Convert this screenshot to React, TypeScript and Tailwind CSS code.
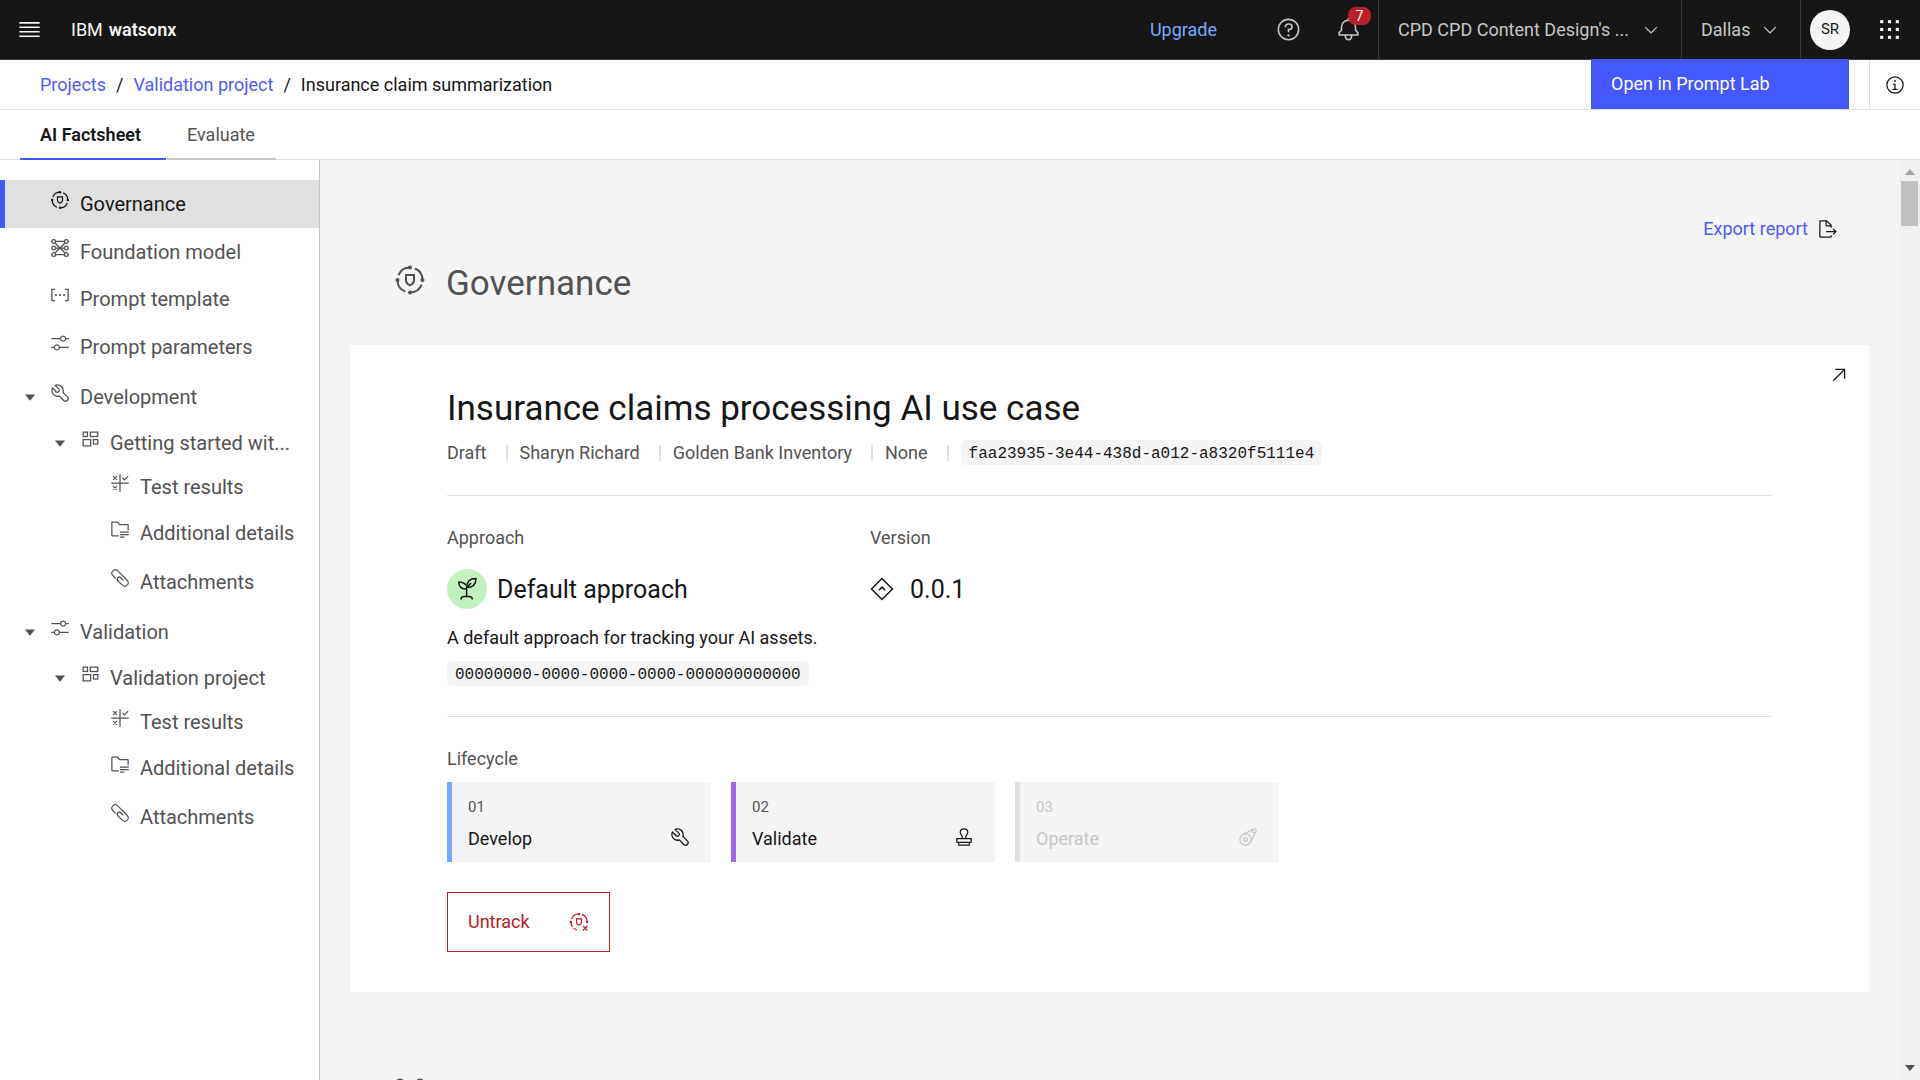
import React from "react";

type IconProps = { className?: string };

function Svg({ className = "size-5", children }: IconProps & { children: React.ReactNode }) {
  return (
    <svg viewBox="0 0 32 32" fill="currentColor" aria-hidden="true" className={`shrink-0 ${className}`}>
      {children}
    </svg>
  );
}

function Shield() {
  return <path d="M12 11h8v5.5c0 2-1.2 3.4-4 4.8-2.8-1.4-4-2.8-4-4.8z" fill="none" stroke="currentColor" strokeWidth="2" />;
}

function GovernanceIcon({ className }: IconProps) {
  return (
    <Svg className={className}>
      <circle cx="16" cy="16" r="12.5" fill="none" stroke="currentColor" strokeWidth="2" strokeDasharray="14.9 4.735" strokeDashoffset="14.9" />
      <circle cx="16" cy="3.5" r="2" />
      <circle cx="28.5" cy="16" r="2" />
      <circle cx="16" cy="28.5" r="2" />
      <circle cx="3.5" cy="16" r="2" />
      <Shield />
    </Svg>
  );
}

function UntrackIcon({ className }: IconProps) {
  return (
    <Svg className={className}>
      <path
        d="M3 16A13 13 0 0 0 5.6 23.8M7.5 25.8A13 13 0 0 0 12.5 28.5M4 11.5A13 13 0 0 1 16 3M20.5 3.8A13 13 0 0 1 29 16M22.5 22.5l7 7M29.5 22.5l-7 7"
        fill="none"
        stroke="currentColor"
        strokeWidth="2"
      />
      <circle cx="16" cy="3" r="2" />
      <circle cx="29" cy="16" r="2" />
      <circle cx="3" cy="16" r="2" />
      <Shield />
    </Svg>
  );
}

function ModelIcon({ className }: IconProps) {
  return (
    <Svg className={className}>
      <g fill="none" stroke="currentColor" strokeWidth="2">
        <circle cx="6" cy="5.5" r="3" />
        <circle cx="26" cy="5.5" r="3" />
        <circle cx="6" cy="16" r="3" />
        <circle cx="26" cy="16" r="3" />
        <circle cx="6" cy="26.5" r="3" />
        <circle cx="26" cy="26.5" r="3" />
        <path d="M9 5.5h14M9 26.5h14M8 8l16 16M24 8L8 24M9 16h14" />
      </g>
    </Svg>
  );
}

function TemplateIcon({ className }: IconProps) {
  return (
    <Svg className={className}>
      <path d="M8 7H3v18h5M24 7h5v18h-5" fill="none" stroke="currentColor" strokeWidth="2" />
      <circle cx="9.5" cy="16" r="1.7" />
      <circle cx="16" cy="16" r="1.7" />
      <circle cx="22.5" cy="16" r="1.7" />
    </Svg>
  );
}

function SlidersIcon({ className }: IconProps) {
  return (
    <Svg className={className}>
      <path d="M30 8h-4.1c-.5-2.3-2.5-4-4.9-4s-4.4 1.7-4.9 4H2v2h14.1c.5 2.3 2.5 4 4.9 4s4.4-1.7 4.9-4H30zm-9 4c-1.7 0-3-1.3-3-3s1.3-3 3-3 3 1.3 3 3-1.3 3-3 3M2 24h4.1c.5 2.3 2.5 4 4.9 4s4.4-1.7 4.9-4H30v-2H15.9c-.5-2.3-2.5-4-4.9-4s-4.4 1.7-4.9 4H2zm9-4c1.7 0 3 1.3 3 3s-1.3 3-3 3-3-1.3-3-3 1.3-3 3-3" />
    </Svg>
  );
}

function WrenchIcon({ className }: IconProps) {
  return (
    <Svg className={className}>
      <path d="M12.1 2a9.8 9.8 0 0 0-5.4 1.6l6.4 6.4a2.1 2.1 0 0 1 .2 3 2.1 2.1 0 0 1-3-.2L3.7 6.4A9.84 9.84 0 0 0 2 12.1a10.14 10.14 0 0 0 10.1 10.1 10.9 10.9 0 0 0 2.6-.3l6.7 6.7a5 5 0 0 0 7.1-7.1l-6.7-6.7a10.9 10.9 0 0 0 .3-2.6A10 10 0 0 0 12.1 2m8 10.1a7.61 7.61 0 0 1-.3 2.1l-.3 1.1.8.8 6.7 6.7a2.88 2.88 0 0 1 .9 2.1A2.72 2.72 0 0 1 27 27a2.9 2.9 0 0 1-4.2 0l-6.7-6.7-.8-.8-1.1.3a7.61 7.61 0 0 1-2.1.3 8.27 8.27 0 0 1-5.7-2.3A7.63 7.63 0 0 1 4 12.1a8.33 8.33 0 0 1 .3-2.2l4.4 4.4a4.14 4.14 0 0 0 5.9.2 4.14 4.14 0 0 0-.2-5.9L10 4.2a6.45 6.45 0 0 1 2-.3 8.27 8.27 0 0 1 5.7 2.3 8.49 8.49 0 0 1 2.4 5.9z" />
    </Svg>
  );
}

function DashboardIcon({ className }: IconProps) {
  return (
    <Svg className={className}>
      <g fill="none" stroke="currentColor" strokeWidth="2">
        <rect x="5" y="5" width="7" height="7" />
        <rect x="16.500" y="5" width="12" height="7" />
        <rect x="5" y="17" width="12" height="10" />
        <rect x="21.500" y="17" width="7" height="7" />
      </g>
    </Svg>
  );
}

function ResultsIcon({ className }: IconProps) {
  return (
    <Svg className={className}>
      <path d="M16 2v28M2 16h28M5 5l6 6M11 5l-6 6M5 21l6 6M11 21l-6 6M20 8l3 3 6-6" fill="none" stroke="currentColor" strokeWidth="2" />
    </Svg>
  );
}

function FolderIcon({ className }: IconProps) {
  return (
    <Svg className={className}>
      <path d="M16 20h14v2H16zM16 24h14v2H16zM16 28h7v2h-7z" />
      <path d="M14 26H4V6h7.17l3.42 3.41.58.59H28v8h2v-8a2 2 0 0 0-2-2H16l-3.41-3.41A2 2 0 0 0 11.17 4H4a2 2 0 0 0-2 2v20a2 2 0 0 0 2 2h10z" />
    </Svg>
  );
}

function ClipIcon({ className }: IconProps) {
  return (
    <Svg className={className}>
      <path d="M28.1 18.9L13.1 3.9a6.4 6.4 0 1 0-9.1 9.1l4.5 4.5 1.4-1.4-4.6-4.5a4.4 4.4 0 0 1 6.4-6.4l15 15a4.4 4.4 0 1 1-6.4 6.4l-7-7a2.3 2.3 0 0 1 3.3-3.3l4.2 4.2 1.4-1.4-4.2-4.2a4.3 4.3 0 1 0-6.1 6.1l7 7a6.4 6.4 0 1 0 9.1-9.1z" />
    </Svg>
  );
}

function CaretIcon({ className }: IconProps) {
  return (
    <Svg className={className}>
      <path d="M24 12L16 22 8 12z" />
    </Svg>
  );
}

function ChevronIcon() {
  return (
    <Svg>
      <path d="M16 22L6 12l1.4-1.4 8.6 8.6 8.6-8.6L26 12z" />
    </Svg>
  );
}

function BellIcon() {
  return (
    <Svg className="size-[25px]">
      <path d="M28.7 19.3L26 16.6V13a10 10 0 0 0-9-9.95V1h-2v2.05A10 10 0 0 0 6 13v3.6l-2.7 2.7A1 1 0 0 0 3 20v3a1 1 0 0 0 1 1h7v.78A5.15 5.15 0 0 0 15.5 30 5 5 0 0 0 21 25v-1h7a1 1 0 0 0 1-1v-3a1 1 0 0 0-.3-.7M19 25a3 3 0 0 1-6 0v-1h6zm8-3H5v-1.6l2.7-2.7A1 1 0 0 0 8 17v-4a8 8 0 0 1 16 0v4a1 1 0 0 0 .3.7l2.7 2.7z" />
    </Svg>
  );
}

function HelpIcon() {
  return (
    <Svg className="size-[25px]">
      <circle cx="16" cy="16" r="13" fill="none" stroke="currentColor" strokeWidth="2" />
      <circle cx="16" cy="23.5" r="1.5" />
      <path d="M17 8h-1.5A4.49 4.49 0 0 0 11 12.5v.5h2v-.5A2.5 2.5 0 0 1 15.5 10H17a2.5 2.5 0 0 1 0 5h-2v4.5h2V17a4.5 4.5 0 0 0 0-9z" />
    </Svg>
  );
}

function InfoIcon() {
  return (
    <Svg>
      <circle cx="16" cy="16" r="13" fill="none" stroke="currentColor" strokeWidth="2" />
      <path d="M17 22v-8h-4v2h2v6h-3v2h8v-2zM16 8a1.5 1.5 0 1 0 1.5 1.5A1.5 1.5 0 0 0 16 8z" />
    </Svg>
  );
}

function MenuIcon() {
  return (
    <Svg className="size-[25px]">
      <path d="M3 7.5h26M3 13.2h26M3 18.9h26M3 24.6h26" stroke="currentColor" strokeWidth="2" />
    </Svg>
  );
}

function AppsIcon() {
  return (
    <Svg className="size-[25px]">
      {[4, 14, 24].map((y) => [4, 14, 24].map((x) => <rect key={`${x}-${y}`} x={x} y={y} width="4" height="4" />))}
    </Svg>
  );
}

function ExportIcon() {
  return (
    <Svg>
      <path d="M13 21h13.17l-2.58 2.59L25 25l5-5-5-5-1.41 1.41L26.17 19H13z" />
      <path d="M22 14v-4a1 1 0 0 0-.29-.71l-7-7A1 1 0 0 0 14 2H4a2 2 0 0 0-2 2v24a2 2 0 0 0 2 2h16a2 2 0 0 0 2-2v-2h-2v2H4V4h8v6a2 2 0 0 0 2 2h6v2zm-8-4V4.41L19.59 10z" />
    </Svg>
  );
}

function StampIcon({ className }: IconProps) {
  return (
    <Svg className={className}>
      <path
        d="M13 18v-3c0-1.5-3-3-3-6.5C10 5 12.5 3 16 3s6 2 6 5.5c0 3.5-3 5-3 6.5v3M4.5 18.5h23v6h-23zM7.5 24.5h17V29h-17z"
        fill="none"
        stroke="currentColor"
        strokeWidth="2"
        strokeLinejoin="round"
      />
    </Svg>
  );
}

function OperateIcon({ className }: IconProps) {
  return (
    <Svg className={className}>
      <g fill="none" stroke="currentColor" strokeWidth="2">
        <circle cx="12" cy="20" r="9" />
        <circle cx="12" cy="20" r="3" />
        <circle cx="26" cy="6" r="3" />
        <path d="M8 12L24.5 3.4M20 24l8.6-16.5" />
      </g>
    </Svg>
  );
}

function SproutIcon() {
  return (
    <Svg className="size-6">
      <g fill="none" stroke="currentColor" strokeWidth="2" strokeLinejoin="round">
        <path d="M15.5 26V14M8 30c0-2.5 2-4 4-4h7c2 0 4 1.5 4 4" />
        <path d="M15.5 14c0-8 4-12 12.5-12 0 8-4 12-12.5 12z" />
        <path d="M15.5 16C9 16 5 13 5 6.5c5 0 8 1.5 9.7 4.5" />
        <path d="M15.5 14l6-6" />
      </g>
    </Svg>
  );
}

function VersionIcon() {
  return (
    <Svg className="size-6">
      <path d="M16 2l14 14-14 14L2 16zM12 17.5l4-4 4 4" fill="none" stroke="currentColor" strokeWidth="2" />
    </Svg>
  );
}

function ArrowIcon() {
  return (
    <Svg>
      <path d="M10 6v2h12.59L6 24.59 7.41 26 24 9.41V22h2V6z" />
    </Svg>
  );
}

type NavItem = { label: string; Icon: React.ComponentType<IconProps>; row: string; caret?: boolean; active?: boolean };

const NAV: NavItem[] = [
  { label: "Governance", Icon: GovernanceIcon, row: "h-12 border-l-[5px] border-[#4358ff] bg-[#e0e0e0] pl-[45px]", active: true },
  { label: "Foundation model", Icon: ModelIcon, row: "h-[47px] pl-[50px]" },
  { label: "Prompt template", Icon: TemplateIcon, row: "h-12 pl-[50px]" },
  { label: "Prompt parameters", Icon: SlidersIcon, row: "h-[47px] pl-[50px]" },
  { label: "Development", Icon: WrenchIcon, row: "mt-[3px] h-[47px] pl-5", caret: true },
  { label: "Getting started wit...", Icon: DashboardIcon, row: "h-[45px] pl-[50px]", caret: true },
  { label: "Test results", Icon: ResultsIcon, row: "h-[43px] pl-[110px]" },
  { label: "Additional details", Icon: FolderIcon, row: "h-[50px] pl-[110px]" },
  { label: "Attachments", Icon: ClipIcon, row: "h-[47px] pl-[110px]" },
  { label: "Validation", Icon: SlidersIcon, row: "mt-[3px] h-[47px] pl-5", caret: true },
  { label: "Validation project", Icon: DashboardIcon, row: "h-[45px] pl-[50px]", caret: true },
  { label: "Test results", Icon: ResultsIcon, row: "h-[43px] pl-[110px]" },
  { label: "Additional details", Icon: FolderIcon, row: "h-[50px] pl-[110px]" },
  { label: "Attachments", Icon: ClipIcon, row: "h-[47px] pl-[110px]" },
];

function Header() {
  return (
    <header className="flex h-[60px] shrink-0 items-stretch border-b border-[#393939] bg-[#161616] text-lg text-[#c6c6c6]">
      <button aria-label="Menu" className="flex w-[60px] items-center justify-center pr-px text-[#f4f4f4]">
        <MenuIcon />
      </button>
      <a href="#home" className="flex items-center gap-[6px] pl-[11px] text-[#f4f4f4]">
        IBM <span className="font-semibold">watsonx</span>
      </a>
      <a href="#upgrade" className="mr-[41px] ml-auto flex items-center text-[#78a9ff]">
        Upgrade
      </a>
      <button aria-label="Help" className="flex w-[60px] items-center justify-center">
        <HelpIcon />
      </button>
      <button aria-label="Notifications" className="relative flex w-[60px] items-center justify-center">
        <BellIcon />
        <span className="absolute top-[7px] left-[30px] flex h-[18px] w-[23px] items-center justify-center rounded-lg bg-[#b8202b] text-sm text-white">
          7
        </span>
      </button>
      <button className="flex w-[303px] items-center justify-between border-l border-[#393939] pr-5 pl-[19px]">
        CPD CPD Content Design's ...
        <ChevronIcon />
      </button>
      <button className="flex w-[119px] items-center justify-between border-l border-[#393939] pr-5 pl-[19px]">
        Dallas
        <ChevronIcon />
      </button>
      <div className="flex w-[60px] items-center justify-center border-l border-[#393939] pr-px">
        <button className="flex size-10 items-center justify-center rounded-full bg-[#f4f4f4] text-[15px] text-[#161616]">SR</button>
      </div>
      <button aria-label="App switcher" className="flex w-[60px] items-center justify-center pr-px text-[#f4f4f4]">
        <AppsIcon />
      </button>
    </header>
  );
}

function TitleBar() {
  return (
    <div className="flex h-[50px] shrink-0 items-stretch border-b border-[#e0e0e0]">
      <nav aria-label="Breadcrumb" className="flex flex-1 items-center gap-[10px] pl-10 text-lg text-[#161616]">
        <a href="#projects" className="text-[#4f5bf5]">Projects</a>
        <span>/</span>
        <a href="#validation-project" className="text-[#4f5bf5]">Validation project</a>
        <span>/</span>
        <span>Insurance claim summarization</span>
      </nav>
      <button className="relative -mt-px mr-5 flex w-[258px] items-center bg-[#4358ff] pl-5 text-lg text-white">Open in Prompt Lab</button>
      <button aria-label="Information" className="flex w-[51px] items-center justify-center border-l border-[#e0e0e0]">
        <InfoIcon />
      </button>
    </div>
  );
}

function Tabs() {
  return (
    <div role="tablist" className="flex h-[50px] shrink-0 border-b border-[#e0e0e0] pl-5 text-lg">
      <button role="tab" aria-selected="true" className="-mb-px w-[146px] border-b-2 border-[#4358ff] pt-[2px] pl-5 text-left font-semibold">
        AI Factsheet
      </button>
      <button role="tab" aria-selected="false" className="-mb-px ml-px w-[109px] border-b-2 border-[#c6c6c6] pt-[2px] pl-5 text-left text-[#525252]">
        Evaluate
      </button>
    </div>
  );
}

function SideNav() {
  return (
    <nav aria-label="Factsheet sections" className="w-[320px] shrink-0 overflow-hidden border-r border-[#c6c6c6] pt-5">
      {NAV.map(({ label, Icon, row, caret, active }, i) => (
        <a
          key={i}
          href={`#item-${i}`}
          className={`flex items-center gap-[10px] text-xl ${active ? "text-[#161616]" : "text-[#525252]"} ${row}`}
        >
          {caret && <CaretIcon />}
          <Icon className="mb-2 size-5" />
          <span className="whitespace-nowrap">{label}</span>
        </a>
      ))}
    </nav>
  );
}

function SectionHeading({ Icon, children }: { Icon: React.ComponentType<IconProps>; children: React.ReactNode }) {
  return (
    <div className="flex h-11 items-center gap-5 pl-11 text-[#525252]">
      <Icon className="mb-1 size-8" />
      <h2 className="mt-1 text-[35px] leading-[44px]">{children}</h2>
    </div>
  );
}

function Code({ children }: { children: React.ReactNode }) {
  return (
    <code className="flex h-[25px] w-fit items-center rounded-[5px] bg-[#f4f4f4] px-2 pt-[2px] font-['Liberation_Mono',monospace] text-base leading-5 text-[#161616]">
      {children}
    </code>
  );
}

const STAGES = [
  { n: "01", name: "Develop", Icon: WrenchIcon, cls: "border-[#78a9ff]", num: "text-[#525252]" },
  { n: "02", name: "Validate", Icon: StampIcon, cls: "border-[#9c67fa]", num: "text-[#525252]" },
  { n: "03", name: "Operate", Icon: OperateIcon, cls: "border-[#e0e0e0] text-[#c6c6c6]", num: "" },
];

function UseCaseCard() {
  return (
    <section className="relative mt-[41px] bg-white px-[97px] pt-[42px] pb-10 text-lg leading-6">
      <button aria-label="Open use case" className="absolute top-5 right-5">
        <ArrowIcon />
      </button>
      <h3 className="text-[35px] leading-[44px]">Insurance claims processing AI use case</h3>
      <div className="mt-[9px] flex items-center text-[#525252]">
        {["Draft", "Sharyn Richard", "Golden Bank Inventory", "None"].map((t) => (
          <React.Fragment key={t}>
            <span>{t}</span>
            <span className="mr-3 ml-[19px] h-4 w-[2px] bg-[#e0e0e0]" />
          </React.Fragment>
        ))}
        <Code>faa23935-3e44-438d-a012-a8320f5111e4</Code>
      </div>

      <div className="mt-[30px] grid grid-cols-[423px_1fr] border-t border-[#e0e0e0] pt-[30px]">
        <div>
          <h4 className="text-[#525252]">Approach</h4>
          <div className="mt-[19px] flex items-center gap-[10px] text-[25px]">
            <span className="flex size-10 items-center justify-center rounded-full bg-[#c2f0bf]">
              <SproutIcon />
            </span>
            <span className="pt-[2px]">Default approach</span>
          </div>
          <p className="mt-[17px]">A default approach for tracking your AI assets.</p>
          <div className="mt-[11px]">
            <Code>00000000-0000-0000-0000-000000000000</Code>
          </div>
        </div>
        <div>
          <h4 className="text-[#525252]">Version</h4>
          <div className="mt-[19px] flex h-10 items-center gap-4 text-[25px]">
            <VersionIcon />
            <span className="pt-[2px]">0.0.1</span>
          </div>
        </div>
      </div>

      <div className="mt-[30px] border-t border-[#e0e0e0] pt-[30px]">
        <h4 className="text-[#525252]">Lifecycle</h4>
        <div className="mt-[11px] flex gap-5">
          {STAGES.map(({ n, name, Icon, cls, num }) => (
            <div key={n} className={`h-20 w-[264px] border-l-[5px] bg-[#f4f4f4] pt-[15px] pr-[21px] pl-4 ${cls}`}>
              <div className={`text-[15px] leading-5 ${num}`}>{n}</div>
              <div className="mt-[10px] flex items-center justify-between">
                <span>{name}</span>
                <Icon className="mb-1 size-5" />
              </div>
            </div>
          ))}
        </div>
        <button className="mt-[30px] flex h-[60px] w-[163px] items-center justify-between border border-[#b8202b] px-5 text-[#b8202b]">
          Untrack
          <UntrackIcon />
        </button>
      </div>
    </section>
  );
}

function Scrollbar() {
  return (
    <div aria-hidden="true" className="flex w-[21px] shrink-0 flex-col items-center justify-between bg-[#f0f0f0] py-[7px]">
      <div className="flex flex-col items-center gap-[6px]">
        <svg viewBox="0 0 10 6" className="mt-[2px] h-[6px] w-[10px] fill-[#a3a3a3]">
          <path d="M0 6l5-6 5 6z" />
        </svg>
        <div className="h-[45px] w-[17px] bg-[#c1c1c1]" />
      </div>
      <svg viewBox="0 0 10 6" className="mb-[2px] h-[6px] w-[10px] fill-[#505050]">
        <path d="M0 0l5 6 5-6z" />
      </svg>
    </div>
  );
}

export default function App() {
  return (
    <div className="flex h-screen flex-col overflow-hidden bg-white font-['Roboto',sans-serif] text-[#161616]">
      <Header />
      <TitleBar />
      <Tabs />
      <div className="flex min-h-0 flex-1">
        <SideNav />
        <main className="min-w-0 flex-1 overflow-hidden bg-[#f4f4f4] px-[30px] pt-[54px]">
          <button className="mr-[31px] ml-auto flex h-[30px] items-center gap-[10px] text-lg text-[#4f5bf5]">
            Export report
            <span className="text-[#161616]">
              <ExportIcon />
            </span>
          </button>
          <div className="mt-4">
            <SectionHeading Icon={GovernanceIcon}>Governance</SectionHeading>
            <UseCaseCard />
          </div>
          <div className="mt-[81px]">
            <SectionHeading Icon={ModelIcon}>Foundation model</SectionHeading>
          </div>
        </main>
        <Scrollbar />
      </div>
    </div>
  );
}
